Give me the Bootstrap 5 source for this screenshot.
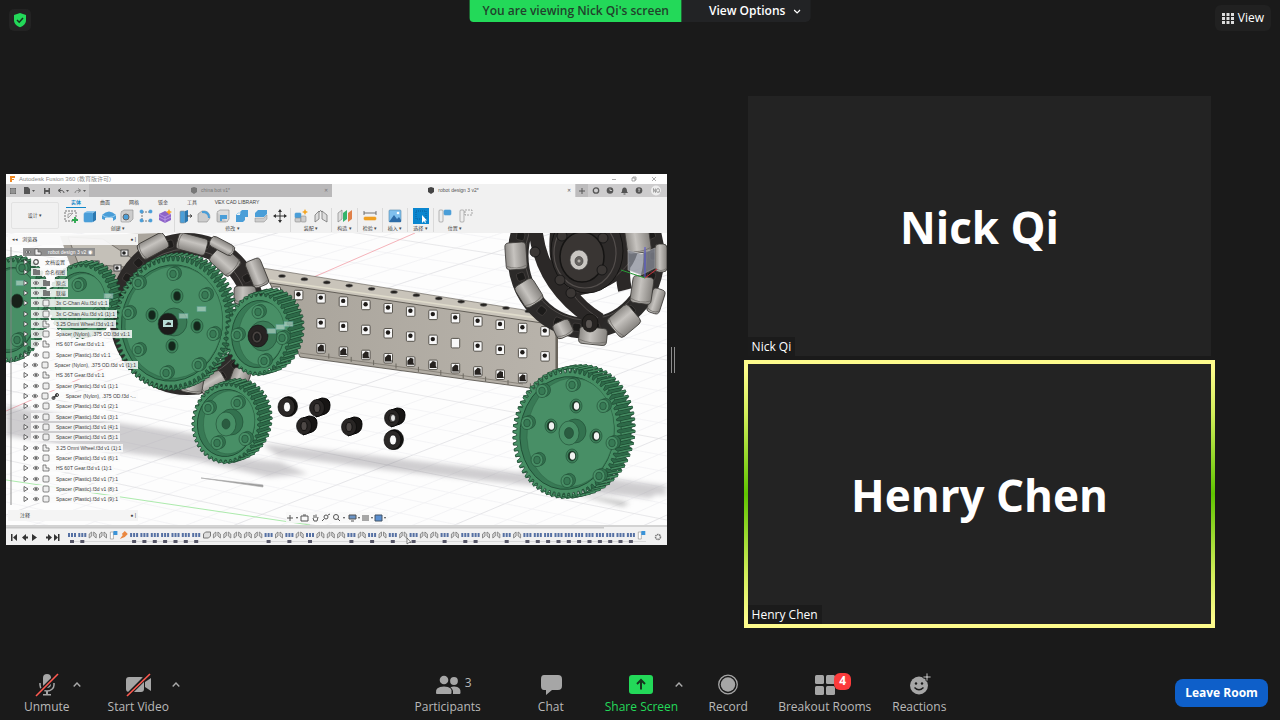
<!DOCTYPE html>
<html lang="en">
<head>
<meta charset="utf-8">
<meta name="viewport" content="width=device-width, initial-scale=1">
<title>Meeting</title>
<link href="https://cdn.jsdelivr.net/npm/bootstrap@5.3.0/dist/css/bootstrap.min.css" rel="stylesheet">
<style>
body{background:#1a1a1a;color:#fff;font-family:"Open Sans","Noto Sans CJK SC",sans-serif;font-size:12px;line-height:16px}
button{border:0;background:none;color:inherit;padding:0;font:inherit}
.topbar{height:56px}
.shield{width:22px;height:22px;background:#232323;border-radius:5px;margin:9px 0 0 9px}
.banner{height:22px;font-weight:600}
.viewing{background:#23d959;color:#21422c;border-radius:0 0 0 4px;padding:0 13px}
.viewopt{background:#222325;border-radius:0 0 5px 0;padding:0 10px 0 27px;font-weight:600}
.viewbtn{background:#212121;border-radius:6px;height:26px;padding:0 7px;margin:5px 9px 0 0}
/* stage */
.share{flex:661 1 0;min-width:0;margin:0 0 2px 6px}
.splitter{flex:0 0 12px;height:26px;gap:2px}
.splitter i{width:1px;background:#8d8d8d}
.gallery{flex:601 1 0}
.tile{width:78.5%;height:268px;padding:4px;position:relative}
.tile .face{background:#232323;font-size:44px;font-weight:700;line-height:60px;padding-top:2px}
.tile .who{position:absolute;left:4px;bottom:4px;background:#1b1b1b;height:19px;padding:0 4px;line-height:20px}
.tile.talking{background:linear-gradient(#fdfb8c 3%,#d3ee5a 20%,#5fc400 50%,#d3ee5a 80%,#fdfb8c 97%)}
.tile.talking::before,.tile.talking::after{content:"";position:absolute;left:0;right:0;height:4px;background:#fdfb8c}
.tile.talking::before{top:0}.tile.talking::after{bottom:0}
/* bottom bar */
.dock{height:56px;color:#b9b9b9}
.ctl{display:flex;flex-direction:column;align-items:center;position:relative;font-weight:500;padding-top:7px}
.ctl svg.ico{height:26px;width:32px;display:block;margin-bottom:2px}
.caret{height:40px;width:14px}
.leave{background:#0e5fc9;border-radius:8px;height:28px;width:93px;font-weight:700;color:#fff;margin:15px 12px 0 0}
.midgroup{gap:21px;padding-left:3px}
.cnt{position:absolute;top:11px;left:100%;margin-left:-16px}
.pill{position:absolute;top:9px;left:56px;background:#fb3b3b;color:#fff;border-radius:6px;height:17px;width:17px;font-weight:700}
.overcaret{position:absolute;left:100%;top:0;margin-left:-6px}
/* cad window */
.cad{background:#f1f1f1;color:#444;font:5px/8px "Liberation Sans","Noto Sans CJK SC",sans-serif}
.cad svg{display:block}
.ttl{height:10px;background:#fff;color:#8a8a8a;font-size:6px}
.tabs{height:13px;background:#cdcccd;color:#555}
.tabs .idle{background:#bab9ba;width:243px;color:#777}
.tabs .live{background:#f1f1f1;width:243px}
.ribbon{height:36px}
.design{width:48px;height:27px;border:1px solid #e2e2e2;border-radius:2px;margin:5px 3px 0 5px}
.rtabs span{text-align:center;line-height:10px}
.rtabs .on{color:#1287c8;border-bottom:1px solid #1287c8;font-weight:700}
.grp{border-right:1px solid #dadada;height:24px}
.view{position:relative;height:292px;overflow:hidden;background:#fdfdfd}
.tree{position:absolute;left:0;top:0;width:132px}
.panelbar{height:11px;background:rgba(250,250,250,.92);margin:1px 0 0 2px;padding:0 2px 0 4px}
.rows{height:258px;margin:2px 0 0 4px;border-left:2px solid rgba(130,130,130,.45);padding-left:6px;white-space:nowrap}
.rw{flex:1 1 0;min-height:0}
.rw .lb{background:rgba(250,250,250,.86);height:8px;color:#3c3c3c;padding-right:2px}
.rw .lb.root{background:#8f8f8f;color:#fff}
.notes{position:absolute;left:2px;bottom:4px;width:130px;height:11px;margin:0;background:#f4f4f4}
.navtools{position:absolute;left:280px;bottom:2px;background:rgba(248,248,248,.9)}
.tl{height:20px;border-top:2px solid #d3d3d3}
</style>
</head>
<body class="d-flex flex-column min-vh-100 overflow-hidden">
<header class="topbar position-relative d-flex justify-content-between align-items-start">
  <button class="shield d-flex align-items-center justify-content-center" aria-label="Security"><svg width="14" height="16" viewBox="0 0 14 16"><path d="M7 1l6 2v5c0 4-3 6-6 7.300C4 14 1 12 1 8V3z" fill="#23d959"/><path d="M4 8l2.200 2.200L10 6" fill="none" stroke="#15331e" stroke-width="1.500"/></svg></button>
  <div class="banner position-absolute top-0 start-50 translate-middle-x d-flex text-nowrap">
    <div class="viewing d-flex align-items-center">You are viewing Nick Qi's screen</div>
    <button class="viewopt d-flex align-items-center">View Options <svg class="ms-2" width="7" height="5" viewBox="0 0 7 5"><path d="M.5 1l3 3 3-3" fill="none" stroke="#fff" stroke-width="1.200"/></svg></button>
  </div>
  <button class="viewbtn d-flex align-items-center"><svg class="me-1" width="12" height="11" viewBox="0 0 12 11" fill="#ddd"><path d="M0 0h3v3H0zM4.500 0h3v3h-3zM9 0h3v3H9zM0 4h3v3H0zM4.500 4h3v3h-3zM9 4h3v3H9zM0 8h3v3H0zM4.500 8h3v3h-3zM9 8h3v3H9z"/></svg>View</button>
</header>

<main class="flex-grow-1 d-flex align-items-center">
  <section class="share cad flex-column d-flex" aria-label="Shared screen">
    <div class="ttl d-flex align-items-center ps-1 pe-1"><svg class="me-1" width="5" height="6"><path d="M0 0h5v2H2v1h2v1H2v2H0z" fill="#f08a24"/></svg>Autodesk Fusion 360 (教育版许可)
      <svg class="ms-auto me-1" width="50" height="8" fill="none" stroke="#888" stroke-width=".7"><path d="M3 4.500h4M23 3h3v3h-3zM24 3V2h3v3h-1M43 2l4 4M47 2l-4 4"/></svg></div>
    <div class="tabs d-flex">
      <svg width="83" height="13" fill="#555"><path d="M4 4h6v6H4z" fill="#666"/><path d="M6 4v6M8 4v6M4 6h6M4 8h6" stroke="#cdcccd" stroke-width=".5"/><path d="M18 3h4l2 2v5h-6zM38 4h6v6h-6z"/><path d="M39.500 4h3v2h-3zM39.500 8h3v2h-3z" fill="#cdcccd"/><path d="M26 6h3l-1.500 2zM60 6h3l-1.500 2zM77 6h3l-1.500 2z"/><path d="M58 9q0-3-5-2.500M55 4.500l-3 2 3 2" fill="none" stroke="#555"/><path d="M69 9q0-3 5-2.500M72 4.500l3 2-3 2" fill="none" stroke="#888"/></svg>
      <div class="idle d-flex align-items-center justify-content-center position-relative"><svg class="me-1" width="6" height="7"><path d="M0 1l3-1 3 1v4L3 7 0 5z" fill="#777"/></svg>china bot v1*<span class="position-absolute end-0 me-1">✕</span></div>
      <div class="live d-flex align-items-center justify-content-center position-relative"><svg class="me-1" width="6" height="7"><path d="M0 1l3-1 3 1v4L3 7 0 5z" fill="#444"/></svg>robot design 3 v2*<span class="position-absolute end-0 me-1">✕</span></div>
      <svg class="ms-auto" width="91" height="13" fill="#555"><path d="M0 0h12v13H0z" fill="#bdbcbd"/><path d="M6 4v6M3 7h6" stroke="#555"/><circle cx="20" cy="6.500" r="2.700" fill="none" stroke="#555" stroke-width="1.300"/><circle cx="34" cy="6.500" r="3.300"/><path d="M34 4.500v2h2" stroke="#ddd" stroke-width=".8" fill="none"/><path d="M45 9l1-1.500q0-4 2.500-4t2.500 4L52 9zM47.500 9.500h2v1h-2z"/><circle cx="63" cy="6.500" r="3.300"/><path d="M62 5.500q1-1.500 2 0l-1 1.200V8" stroke="#ddd" stroke-width=".8" fill="none"/><circle cx="80" cy="6.500" r="5" fill="#eee"/><path d="M77.500 8.500v-4l2 4v-4M84 8.500l-1-1M83.500 6.500a1.500 2 0 1 1-3 0a1.500 2 0 1 1 3 0" stroke="#777" stroke-width=".6" fill="none"/></svg>
    </div>
    <div class="ribbon d-flex">
      <button class="design">设计 ▾</button>
      <div>
        <div class="rtabs d-flex ps-1"><span class="on" style="width:20px">实体</span><span style="width:38px">曲面</span><span style="width:20px">网格</span><span style="width:38px">钣金</span><span style="width:20px">工具</span><span style="width:70px">VEX CAD LIBRARY</span></div>
        <div class="d-flex" id="tools"></div>
      </div>
    </div>
    <div class="view">
      <svg id="scene" width="100%" height="292" viewBox="6 233 661 292" preserveAspectRatio="xMinYMin slice" aria-hidden="true"></svg>
      <div class="tree">
        <div class="panelbar d-flex align-items-center">◂◂ &nbsp; 浏览器<span class="ms-auto">● |</span></div>
        <div class="rows d-flex flex-column" id="rows"></div>
      </div>
      <div class="panelbar notes d-flex align-items-center"><span class="ms-2">注释</span><span class="ms-auto">● |</span></div>
      <svg class="navtools" width="102" height="11" fill="none" stroke="#555"><path d="M4 3v6M1 6h6M15 4h7v5h-7zM17 3h3M27 6l1 3h3l1-4M28 6V3M30 6V2.500"/><circle cx="40" cy="5" r="2"/><path d="M38 7l-2 2M42 3l2-1M52 7l2 2"/><circle cx="50" cy="5" r="2.500"/><path d="M63 3h7v4h-7z" fill="#6b93c4"/><path d="M65 9h3M76 4h7M76 6h7M76 8h7"/><path d="M89 3h7v6h-7z" fill="#5b8fd0" stroke="#456"/><path d="M10 5h2l-1 2zM57 5h2l-1 2zM72 5h2l-1 2zM85 5h2l-1 2zM98 5h2l-1 2z" fill="#444" stroke="none"/></svg>
    </div>
    <svg class="tl" id="timeline" width="100%" height="20" aria-hidden="true"></svg>
  </section>
  <div class="splitter d-flex justify-content-center"><i></i><i></i></div>
  <section class="gallery d-flex flex-column align-items-center">
    <div class="tile"><div class="face h-100 d-flex align-items-center justify-content-center">Nick Qi</div><div class="who">Nick Qi</div></div>
    <div class="tile talking"><div class="face h-100 d-flex align-items-center justify-content-center">Henry Chen</div><div class="who">Henry Chen</div></div>
  </section>
</main>

<footer class="dock d-flex align-items-start">
  <div class="d-flex ps-4">
    <button class="ctl"><svg class="ico" viewBox="0 0 32 26"><g fill="#a6a6a6"><rect x="12" y="3" width="8" height="14" rx="4"/><path d="M9 12v2a7 6 0 0 0 14 0v-2" fill="none" stroke="#a6a6a6" stroke-width="1.500"/><path d="M15 20h2v3h3v1.500h-8V23h3z"/></g><path d="M5.500 24.500L27 3" stroke="#1a1a1a" stroke-width="4"/><path d="M5 25L27 3" stroke="#ff5a50" stroke-width="1.600"/></svg>Unmute</button>
    <button class="caret" aria-label="Audio options"><svg width="8" height="5" viewBox="0 0 8 5"><path d="M.7 4.500L4 1l3.300 3.500" fill="none" stroke="#aaa" stroke-width="1.400"/></svg></button>
    <button class="ctl ms-4"><svg class="ico" viewBox="0 0 32 26"><rect x="4" y="6" width="18" height="15" rx="3" fill="#a6a6a6"/><path d="M23 11l6-4v13l-6-4z" fill="#a6a6a6"/><path d="M5.500 24.500L27 3" stroke="#1a1a1a" stroke-width="4"/><path d="M5 25L28 3" stroke="#ff5a50" stroke-width="1.600"/></svg>Start Video</button>
    <button class="caret" aria-label="Video options"><svg width="8" height="5" viewBox="0 0 8 5"><path d="M.7 4.500L4 1l3.300 3.500" fill="none" stroke="#aaa" stroke-width="1.400"/></svg></button>
  </div>
  <div class="midgroup d-flex mx-auto">
    <button class="ctl me-3"><svg class="ico" viewBox="0 0 32 26" fill="#a6a6a6"><circle cx="12" cy="9" r="4.300"/><circle cx="22" cy="10" r="3.900"/><path d="M4 22q-1-6.500 8-6.500T19.500 22q0 1-1 1H5q-1 0-1-1zM21 23v-3q-.5-2-2.500-3.800q2-1 4-.7q6.500.5 6 6 0 1.500-1 1.500z"/></svg><span class="cnt">3</span>Participants</button>
    <button class="ctl" style="min-width:66px"><svg class="ico" viewBox="0 0 32 26"><path d="M9 4h14q4 0 4 4v7q0 4-4 4h-6l-6 5v-5H9q-3 0-3-4V8q0-4 3-4z" fill="#a6a6a6"/></svg>Chat</button>
    <button class="ctl" style="color:#23d959"><svg class="ico" viewBox="0 0 32 26"><rect x="4" y="4" width="24" height="19" rx="3" fill="#23d959"/><path d="M16 18.500V9.500M12 13l4-4 4 4" fill="none" stroke="#17351f" stroke-width="2"/></svg>Share Screen<span class="caret overcaret d-flex align-items-center justify-content-center"><svg width="8" height="5" viewBox="0 0 8 5"><path d="M.7 4.500L4 1l3.300 3.500" fill="none" stroke="#aaa" stroke-width="1.400"/></svg></span></button>
    <button class="ctl" style="min-width:58px"><svg class="ico" viewBox="0 0 32 26"><circle cx="16" cy="13.500" r="9.300" fill="none" stroke="#a6a6a6" stroke-width="1.300"/><circle cx="16" cy="13.500" r="7.200" fill="#a6a6a6"/></svg>Record</button>
    <button class="ctl"><svg class="ico" viewBox="0 0 32 26" fill="#a6a6a6"><rect x="6" y="4" width="9" height="9" rx="1.500"/><rect x="17" y="4" width="9" height="9" rx="1.500"/><rect x="6" y="15" width="9" height="9" rx="1.500"/><rect x="17" y="15" width="9" height="9" rx="1.500"/></svg><span class="pill">4</span>Breakout Rooms</button>
    <button class="ctl"><svg class="ico" viewBox="0 0 32 26"><circle cx="16" cy="14.500" r="9" fill="#a6a6a6"/><path d="M23 2h2v3h3v2h-3v3h-2V7h-3V5h3z" fill="#a6a6a6" stroke="#1a1a1a" stroke-width=".8"/><circle cx="13" cy="12.500" r="1.200" fill="#1a1a1a"/><circle cx="19" cy="12.500" r="1.200" fill="#1a1a1a"/><path d="M11.500 16.500q4.500 4.500 9 0" fill="none" stroke="#1a1a1a" stroke-width="1.400"/></svg>Reactions</button>
  </div>
  <button class="leave">Leave Room</button>
</footer>

<script>
// ribbon tools
const B='#4a9ed8',G='#8a8a8a';
const box=(x,y,w,h,c,s=G)=>`<rect x="${x}" y="${y}" width="${w}" height="${h}" rx="1" fill="${c}" stroke="${s}" stroke-width=".6"/>`;
const icons={
 sketch:`<path d="M1 2h11v10H1z" fill="none" stroke="#777" stroke-dasharray="2 1"/><path d="M4 9V5l5-1z" fill="none" stroke="#777" stroke-width=".6"/><path d="M11 8v6M8 11h6" stroke="#2ca84e" stroke-width="1.800"/>`,
 ext:`<path d="M1 4l3-2h9l-3 2z" fill="#8cc6ee"/>`+box(1,4,9,9,B,B)+`<path d="M10 4l3-2v9l-3 2z" fill="#2b78b0"/>`,
 rev:`<path d="M0 10V6q7-7 14 0v4l-3 2V9q-4-2-8 0v2z" fill="${B}"/><path d="M0 6q7 5 14 0" stroke="#9cd0f0" fill="none"/>`,
 hole:box(1,3,9,10,'#ddd')+`<path d="M1 3l3-2h9v9l-3 3" fill="#ccc" stroke="${G}" stroke-width=".6"/><circle cx="6" cy="8" r="3" fill="${B}" stroke="#666"/>`,
 pat:`<path d="M3 3h9M3 3v9h9" fill="none" stroke="#777" stroke-dasharray="2 1"/>`+box(1,1,3,3,B,B)+box(10,1,3,3,B,B)+box(1,10,3,3,B,B)+box(10,10,3,3,B,B),
 form:`<path d="M1 5l6-3 6 3v6l-6 3-6-3z" fill="#8d63c8"/><path d="M1 5l6 3 6-3M7 8v6M1 8l6 3 6-3" stroke="#c5a9ec" fill="none" stroke-width=".7"/><path d="M11 0l1 2 2 1-2 1-1 2-1-2-2-1 2-1z" fill="#f5a623"/>`,
 push:box(2,2,5,12,B)+`<path d="M7 2l3-1v11l-3 2z" fill="#2b78b0"/><path d="M9 7h5M12 5.500l2 1.500-2 1.500" stroke="#444" fill="none"/>`,
 fil:`<path d="M1 13V5l4-3h3q5 1 5 7l-3 4z" fill="#ccc" stroke="${G}" stroke-width=".6"/><path d="M5 2h3q5 1 5 7h-2q0-5-6-5z" fill="${B}"/>`,
 shell:box(1,3,10,10,'#ccc')+`<path d="M1 3l3-2h9v9l-2 3" fill="#ddd" stroke="${G}" stroke-width=".6"/><path d="M4 6h7v4H6v2H4z" fill="${B}"/>`,
 comb:`<path d="M1 6h4V3l2-2h6v7h-3v3l-2 2H1z" fill="${B}"/><path d="M1 6l2-2h3" stroke="#9cd0f0" fill="none"/>`,
 split:`<path d="M1 4l3-3h9v4l-3 3H1z" fill="${B}"/><path d="M1 9h9l3-3v4l-3 3H1z" fill="#ccc" stroke="${G}" stroke-width=".5"/>`,
 move:`<path d="M7 1v12M1 7h12" stroke="#333"/><path d="M7 0l2 3H5zM7 14l2-3H5zM0 7l3-2v4zM14 7l-3-2v4z" fill="#333"/>`,
 comp:box(1,4,6,5,B,B)+box(1,9,6,4,'#ccc')+box(7,7,5,6,'#ccc')+`<path d="M11 0l1 2 2 1-2 1-1 2-1-2-2-1 2-1z" fill="#f5a623"/>`,
 joint:`<path d="M1 13V6l4-4v8zM13 13V6L8 2v8z" fill="#ddd" stroke="#777" stroke-width=".8"/><path d="M5 3q2-3 3 0" fill="none" stroke="#777"/>`,
 cons:`<path d="M0 13V4l4-3v9z" fill="#ddd" stroke="#777" stroke-width=".6"/><path d="M5 13V4l4-3v9z" fill="#35b36b"/><path d="M10 13V4l4-3v9z" fill="#e08048"/>`,
 meas:`<path d="M1 4h12M1 2v4M13 2v4" stroke="#555" stroke-width=".8"/>`+box(1,8,12,3,'#f0a020','#f0a020'),
 ins:box(1,1,12,12,'#7fc0ee','#58a')+`<path d="M1 13l5-7 3 4 2-2 2 3v2z" fill="#2d6ca8"/><circle cx="10" cy="4" r="1.300" fill="#fff"/>`,
 sel:`<path d="M-1-1h16v16H-1z" fill="#0a86cf"/><path d="M2 2h10v8H2z" fill="none" stroke="#0d4f86" stroke-dasharray="1 1" stroke-width=".7"/><path d="M8 6v8l2-2 1 2 1-.5-1-2h2z" fill="#fff"/>`,
 pos:box(1,1,4,12,'#eee')+box(6,1,7,5,B,B),
 pos2:box(1,1,4,12,'#eee')+`<path d="M6 1h7v5H6z" fill="none" stroke="#777" stroke-width=".6" stroke-dasharray="2 1"/>`
};
const groups=[['创建',113,['sketch','ext','rev','hole','pat','form']],['修改',116,['push','fil','shell','comb','split','move']],['装配',41,['comp','joint']],['构造',26,['cons']],['检验',25,['meas']],['插入',25,['ins']],['选择',26,['sel']],['位置',42,['pos','pos2']]];
tools.innerHTML=groups.map(([n,w,a],k)=>`<div class="grp ${k==7?'border-0':''}" style="width:${w}px"><div class="d-flex justify-content-around">${a.map(i=>`<button aria-label="${n}"><svg width="16" height="16" viewBox="-1 -1 16 16">${icons[i]}</svg></button>`).join('')}</div><div class="text-center">${n} ▾</div></div>`).join('');
// browser tree
const P='Spacer (Plastic).f3d v1',N='Spacer (Nylon), .375 OD.f3d';
const list=[['c','robot design 3 v2  ◉'],['g','文档设置'],['d','命名视图'],['d','原点'],['d','联接'],['b','3x C-Chan Alu.f3d v1:1'],['b','3x C-Chan Alu.f3d v1 (1):1'],['c','3.25 Omni Wheel.f3d v1:1'],['b',N+' v1:1'],['c','HS 60T Gear.f3d v1:1'],['b',P+':1'],['b',N+' v1 (1):1'],['c','HS 36T Gear.f3d v1:1'],['b',P+' (1):1'],['l',N+' -...'],['b',P+' (2):1'],['b',P+' (3):1'],['b',P+' (4):1'],['b',P+' (5):1'],['c','3.25 Omni Wheel.f3d v1 (1):1'],['b',P+' (6):1'],['c','HS 60T Gear.f3d v1 (1):1'],['b',P+' (7):1'],['b',P+' (8):1'],['b',P+' (9):1']];
const eye='<path d="M2 4q3-3.500 6 0q-3 3.500-6 0z" fill="#ccc" stroke="#666" stroke-width=".7"/><circle cx="5" cy="4" r="1.100" fill="#555"/>';
const cube='<rect x="12" y="1" width="6" height="6" rx="1" fill="#eee" stroke="#555" stroke-width=".7"/>';
const folder='<path d="M12 1h3l1 1h3v5h-7z" fill="#777"/>';
const kinds={b:cube,l:cube+'<path d="M23 6.500l4-4" stroke="#333" stroke-width="1.200"/><circle cx="23.500" cy="6" r="1.500" fill="none" stroke="#333"/><circle cx="27" cy="3" r="1.500" fill="none" stroke="#333"/>',c:'<path d="M12 1h3v3h3v3h-6z" fill="#eee" stroke="#555" stroke-width=".7"/>',d:folder};
rows.innerHTML=list.map(([k,t],i)=>{
 const top=i==1||i==2;
 const art=i==1?'<circle cx="5" cy="4" r="2.300" fill="none" stroke="#555" stroke-width="1.200"/>':i==2?'<path d="M2 1h3l1 1h3v5H2z" fill="#777"/>':eye+kinds[k];
 return `<div class="rw d-flex align-items-center"><svg width="${i?13:5}" height="8">${i?'<path d="M6 1.500l4 2.500-4 2.500z" fill="#f4f4f4" stroke="#333" stroke-width=".7"/>':''}</svg><span class="lb d-flex ${i?'':'root'}"><svg width="${k=='l'?36:top?14:25}" height="8">${art}</svg>${t}</span></div>`}).join('');
// 3d scene
let s='';
const pt=(cx,cy,rx,ry,a,rot=0)=>{const c=Math.cos(rot),n=Math.sin(rot),x=rx*Math.cos(a),y=ry*Math.sin(a);return [(cx+x*c-y*n).toFixed(1),(cy+x*n+y*c).toFixed(1)]};
const el=(x,y,a,b,f,st='#1f4a32',w=.6)=>`<ellipse cx="${x}" cy="${y}" rx="${a}" ry="${b}" fill="${f}" stroke="${st}" stroke-width="${w}"/>`;
s+=`<defs><filter id="soft" x="-20%" y="-50%" width="140%" height="200%"><feGaussianBlur stdDeviation="2.500"/></filter><linearGradient id="rol"><stop offset="0" stop-color="#8d8a86"/><stop offset=".4" stop-color="#c6c3bf"/><stop offset="1" stop-color="#86837f"/></linearGradient><linearGradient id="chan"><stop offset="0" stop-color="#a9a49b"/><stop offset="1" stop-color="#b8b3ab"/></linearGradient></defs>`;
for(let i=0;i<34;i++){s+=`<path d="M6 ${215+i*20}L667 ${35+i*16}" stroke="${i%5?'#ececf0':'#d5d5da'}" stroke-width=".6"/>`}
for(let i=0;i<34;i++){s+=`<path d="M6 ${110+i*14}L667 ${200+i*16}" stroke="${i%5?'#eeeef1':'#dadade'}" stroke-width=".6"/>`}
s+='<path d="M6 411L415 233" stroke="#f3a0a8" stroke-width=".8"/><path d="M6 480L310 525" stroke="#97e597" stroke-width=".8"/>';
s+='<g filter="url(#soft)" fill="#77737a" opacity=".34"><path d="M6 406l120 18 110 16-10 24-90-10L6 436z"/><path d="M262 444l80 8 150 18 170 17 6 8-70-3-120-12-90-10-110-14z"/><path d="M520 470l30-6 70 16 50 6-20 12-90-8z"/><path d="M150 450l130 12 28 12-40 3z"/></g><path d="M201 478l62 7v2z" fill="#999" stroke="#aaa" stroke-width=".6"/><path d="M560 490l70 13-8 3z" fill="#888" opacity=".6" filter="url(#soft)"/>';
// channel
s+='<path d="M262 268L568 317 566 322 556 327 270 284z" fill="#c9c4ba" stroke="#5d5850" stroke-width=".6"/><path d="M270 283L556 325V392L523 387 300 357z" fill="url(#chan)" stroke="#4d4942" stroke-width=".8"/><path d="M270 280L558 321" stroke="#e0dccc" stroke-width="1.500"/><path d="M557 325v52" stroke="#69645c" stroke-width="2"/><path d="M300 353L523 384" stroke="#7c776e" stroke-width=".8"/>';
for(let i=0;i<13;i++){const x=276+22.4*i,y=291+3.3*i;
 s+=el((x+6).toFixed(1),(y-15+i*-.1).toFixed(1),3.5,1.6,'#25221f','#777');
 for(let r=0;r<3;r++){ if(r&&i<2||r==2&&i>11)continue; const yy=y+r*25;
  s+=`<rect x="${(x-4).toFixed(1)}" y="${(yy-4).toFixed(1)}" width="8.500" height="9.500" rx="1" fill="#f8f8f8" stroke="#4a463f" stroke-width=".9"/>`;
  if(!(r==1&&i==8))s+=r==2?`<path d="M${x-3} ${yy+4}v-4l3-3 3 1v4l1 2z" fill="#26221f"/>`:`<circle cx="${x}" cy="${yy}" r="2.200" fill="#1d1a18"/>`;}
 if(i>1&&i<12)s+=`<path d="M${x+8} ${y+56}v5" stroke="#6b675f"/>`}
const roller=(x,y,w,h,r)=>`<g transform="translate(${x} ${y}) rotate(${r})"><rect x="${-w/2}" y="${-h/2}" width="${w}" height="${h}" rx="4" fill="url(#rol)" stroke="#3a3835" stroke-width=".8"/><path d="M${-w/2} ${h/2-4}q${w/2} 5 ${w} 0" fill="none" stroke="#6c6965" stroke-width=".7"/></g>`;
// right omni wheel
s+='<ellipse cx="586" cy="256" rx="68" ry="72" fill="none" stroke="#2c2a29" stroke-width="21"/><ellipse cx="586" cy="256" rx="61" ry="64" fill="none" stroke="#514d4b" stroke-width="1"/><path d="M535 225Q540 290 602 325M558 225Q548 290 600 320M632 225Q640 280 570 290M628 228Q620 270 625 290" fill="none" stroke="#2b2827" stroke-width="14"/><path d="M560 233Q550 285 598 318M630 262Q605 292 575 292" fill="none" stroke="#504b49" stroke-width="1"/><ellipse cx="587" cy="251" rx="36" ry="42" fill="#2e2b2a" stroke="#151413"/>';
s+='<ellipse cx="585" cy="253" rx="31" ry="35" fill="none" stroke="#534e4c" stroke-width="1.200"/><ellipse cx="582" cy="257" rx="22" ry="25" fill="#393533" stroke="#151413" stroke-width="1.500"/>';
for(let i=0;i<22;i++){const p=pt(586,256,68,72,i*.285);s+=`<rect x="${p[0]-4}" y="${p[1]-4}" width="8" height="8" rx="2" fill="#1c1b1a" stroke="#45413f" stroke-width=".7" transform="rotate(${i*16} ${p[0]} ${p[1]})"/>`}
[[562,236],[603,238],[602,270],[560,280],[571,293],[535,252]].forEach(p=>s+=el(p[0],p[1],5,5,'#3b3735','#111',.8));
s+=el(579,260,9,10,'#c9c6c2','#444')+el(579,261,4,4.5,'#6b6764','#333')+el(579,261,2,2,'#b5b0ab','#444');
[[516,256,21,27,-4],[529,293,21,25,-32],[563,329,18,16,-25],[593,336,28,17,6],[624,321,24,27,50],[656,301,13,25,18],[642,290,21,27,8],[638,240,24,26,-8],[661,258,12,28,0]].forEach(a=>s+=roller(...a));
s+=el(590,323,8,9,'#262321','#0c0b0a')+el(589,324,3.5,4.5,'#5a5552','#111');
s+='<path d="M628 250l13 4 14-6v20l-14 7-13-5z" fill="#888c98" opacity=".75" stroke="#ccc" stroke-width=".6"/><path d="M645 278V247" stroke="#5353d8"/><path d="M645 278l-24-8" stroke="#279a35"/><path d="M645 278l12-9" stroke="#cc3038"/>';
// left omni wheel and brackets
s+='<path d="M60 236l100-3-20 50-60 10z" fill="#aaa59d"/><path d="M68 237l35 2 45 30-70-6z" fill="#c4c0b8" stroke="#5c5750" stroke-width=".7"/>';
[[95,264],[117,268],[124,253]].forEach(p=>s+=`<rect x="${p[0]-3}" y="${p[1]-3}" width="7" height="6" fill="#eee" stroke="#444"/><circle cx="${p[0]}" cy="${p[1]}" r="1.800" fill="#222"/>`);
s+='<ellipse cx="187" cy="314" rx="67" ry="70" fill="none" stroke="#2d2a29" stroke-width="22"/><ellipse cx="187" cy="314" rx="62" ry="65" fill="none" stroke="#5a5553" stroke-width="1"/>';
for(let i=0;i<24;i++){const p=pt(187,314,69,72,i*.262);s+=`<rect x="${p[0]-4}" y="${p[1]-4}" width="8" height="8" rx="2" fill="#1f1d1c" stroke="#45413f" stroke-width=".7" transform="rotate(${i*15} ${p[0]} ${p[1]})"/>`}
[[153,246,17,30,62],[192,244,17,30,105],[225,261,21,27,-48],[257,273,16,28,-22],[245,295,22,18,0],[222,246,11,26,-62],[212,383,17,26,60],[192,384,22,18,10],[240,378,18,18,20]].forEach(a=>s+=roller(...a));
// gears
function gear(cx,cy,rx,ry,n,dx,dy,rot,inner){
 const arc=k=>{let d='';for(let i=0;i<n;i++){[[0,1],[.3,1],[.5,.93],[.8,.93]].forEach(([o,r])=>{const q=pt(cx+k*dx,cy+k*dy,rx*r,ry*r,(i+o)*2*Math.PI/n,rot);d+=(d?'L':'M')+q[0]+' '+q[1]})}return d+'Z'};
 let o=`<path d="${arc(1)}" fill="#2d6a48" stroke="#1c4630" stroke-width=".7"/>`;
 for(let i=0;i<n;i++){const a=pt(cx,cy,rx,ry,(i+.15)*2*Math.PI/n,rot);
  const b=[(+a[0]+dx).toFixed(1),(+a[1]+dy).toFixed(1)];
  o+=`<path d="M${a}L${b}" stroke="#183d29" stroke-width="2.700"/><path d="M${a}L${b}" stroke="#438a60" stroke-width="1.700"/>`}
 o+=`<path d="${arc(0)}" fill="#468f64" stroke="#1c4630" stroke-width=".7"/>`;
 const R=`transform="rotate(${rot*57.3} ${cx} ${cy})"`;
 o+=`<ellipse cx="${cx}" cy="${cy}" rx="${rx*inner}" ry="${ry*inner}" fill="#387a55" stroke="#1c4630" stroke-width=".8" ${R}/><ellipse cx="${cx+dx*.25}" cy="${cy-1}" rx="${rx*inner-dx*.25}" ry="${ry*inner-2}" fill="#488f66" stroke="#2b5f42" stroke-width=".5" ${R}/>`;return o}
const boss=(x,y,r)=>el(x+2.5,y-1,r,r*1.1,'#33724f')+el(x,y,r,r*1.1,'#488f66')+el(x,y,r*.55,r*.65,'#387a55');
const hole=(x,y)=>el(x,y,6,7,'#3e825b')+el(x,y,4,5,'#1a3022')+el(x+.5,y,2.700,3.800,'#f0f3f1','none');
s+=gear(10,310,34,52,44,6,-2,.1,.82)+boss(22,268,6)+boss(17,340,6)+el(17,301,6,7,'#182119');
s+=gear(80,301,32,37,38,9,-3,.15,.78)+boss(78,285,6)+boss(98,312,5)+boss(72,319,6);
s+=gear(172,323,58,67,72,7,-3,.12,.87);
[[173,274],[205,295],[213,334],[198,365],[166,373],[138,350],[128,313],[138,283]].forEach(p=>s+=boss(p[0],p[1],6));
[[177,296],[197,326],[172,346],[152,315]].forEach(p=>s+=el(p[0],p[1],6,7,'#3e825b')+el(p[0],p[1],3.500,4.500,'#14261b'));
s+=el(174,322,13,14,'#3a7a56')+el(168,324,10,11,'#1c1b1a')+'<path d="M163 320h10v7h-10z" fill="#b9dcd6"/><path d="M165 325l3-3 3 1v2z" fill="#333"/>';
s+=gear(258,334,32,41,40,14,-4,.12,.82);
[[258,312],[237,335],[264,361],[282,338]].forEach(p=>s+=boss(p[0],p[1],6));
s+=el(263,336,14,15,'#3a7a56')+el(258,336,10,11,'#272423','#111')+el(257,337,5,6,'#474240','#111')+el(257,337,2.500,3.500,'#222','#111');
s+=gear(226,423,34,40,42,12,-4,.12,.84);
[[208,408],[237,403],[245,439],[217,443]].forEach(p=>s+=boss(p[0],p[1],6));
s+=el(231,422,12,13,'#33724f')+el(226,424,10,12,'#488f66')+el(226,424,4,5,'#2a5c40');
s+=gear(567,433,54,65,66,14,-3,.12,.87);
[[542,391],[572,385],[603,406],[612,443],[599,476],[567,481],[537,460],[527,423]].forEach(p=>s+=boss(p[0],p[1],6));
[[576,406],[551,426],[596,436],[572,456]].forEach(p=>s+=hole(...p));
s+=el(575,431,11,12,'#33724f')+el(569,433,10,12,'#488f66')+el(569,433,4.500,5.500,'#2a5c40');
// joint glyphs
[[184,316],[202,309],[272,331],[281,327],[289,324],[109,296],[21,283]].forEach(p=>s+=`<rect x="${p[0]-5}" y="${p[1]-2.500}" width="9" height="5" fill="#c4e0d9" stroke="#6aa" stroke-width=".6" opacity=".6"/>`);
// loose spacers
const ring=(x,y)=>el(x+1.500,y-.5,9,10,'#141312','#000')+el(x-.5,y,8.500,9.500,'#2b2827','#000')+el(x,y,3.500,5,'#fafafa','#000');
const cyl=(x,y)=>`<path d="M${x-4} ${y-7}l6-2q8 0 8 7t-5 9l-9 3z" fill="#171514" stroke="#000"/>`+el(x-3,y+1,7.500,8.500,'#282524','#050505')+el(x-3,y+1,3,4.500,'#4d4846','#000');
s+=ring(287,407)+cyl(320,407)+cyl(307,425)+cyl(352,426)+cyl(395,417)+el(393,418,2.500,3.500,'#e5e5e5','#000')+ring(393,440);
scene.innerHTML=s;
// timeline
let t='<path d="M0 0h598" stroke="#c9c9c9" stroke-width="3"/><g fill="#333"><path d="M5 7h1.500v7H5zM11 7v7l-4-3.500zM20 7v7l-4-3.500zM20 9.500h2v2h-2zM26 7v7l5-3.500zM42 7v7l4-3.500zM40 9.500h2v2h-2zM48 7v7l4-3.500zM52 7h1.500v7H52z"/></g><path d="M66 14.500H640" stroke="#c7c7c7" stroke-width=".6"/>';
[...'iijjfpiiiiiiibjjjjjijijijjjijijijijjijiijjijiiiiiiiiiiif'].forEach((k,i)=>{const x=+(66+i*10.35).toFixed(1);
 if(k=='i')t+=`<path d="M${x-4} 6h2v4h-2zM${x-1} 6h2v4h-2zM${x+2} 6h2v4h-2z" fill="#5570a3"/><path d="M${x-2} 13h4v3h-4z" fill="#556"/>`;
 if(k=='j')t+=`<path d="M${x-3.500} 11V7l2.500-2v4zM${x+3.500} 11V7L${x+1} 5v4z" fill="#ddd" stroke="#777" stroke-width=".8"/>`;
 if(k=='f')t+=`<path d="M${x-3} 5h3v7h-3z" fill="#fff" stroke="#888" stroke-width=".6"/><path d="M${x} 4h4v4h-4z" fill="#3a93d8"/>`;
 if(k=='p')t+=`<path d="M${x-4} 12l3-4-1-1 3-3 3 3-3 3z" fill="#ea8840"/>`;
 if(k=='b')t+=`<path d="M${x-3} 7l2-2h5v4l-2 2h-5z" fill="#ddd" stroke="#777"/>`});
t+='<circle cx="652" cy="10" r="2.500" fill="none" stroke="#777" stroke-width="1.500" stroke-dasharray="1.500 .6"/><path d="M401 11v6l2-1.500h2z" fill="#fff" stroke="#333" stroke-width=".6"/>';
timeline.innerHTML=t;
</script>
<script src="https://cdn.jsdelivr.net/npm/bootstrap@5.3.0/dist/js/bootstrap.bundle.min.js"></script>
</body>
</html>
